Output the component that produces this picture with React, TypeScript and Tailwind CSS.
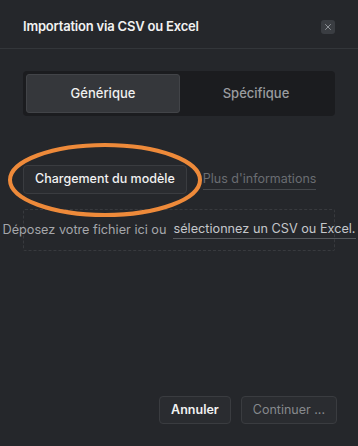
import { X } from 'lucide-react';

export default function App() {
  return (
    <div className="relative w-[358px] h-[446px] bg-[#25272b] text-white overflow-hidden flex flex-col" style={{ fontFamily: 'Inter, "Noto Sans", sans-serif' }}>
      {/* Header */}
      <div className="h-[49px] pt-[6px] flex items-center justify-between px-[23px] border-b border-[#33363a] shrink-0">
        <span className="text-[13px] font-semibold tracking-[-0.2px] text-[#f2f2f2]">Importation via CSV ou Excel</span>
        <button className="w-[14px] h-[14px] rounded-[3px] bg-[#3a3d42] flex items-center justify-center text-[#a0a3a8]">
          <X size={10} strokeWidth={2} />
        </button>
      </div>

      {/* Body */}
      <div className="flex-1 flex flex-col px-[23px] pt-[22px]">
        <div className="h-[45px] rounded-[4px] bg-[#1b1c1f] p-[3px] flex">
          <div className="w-[154px] rounded-[3px] bg-[#35373b] border border-[#424448] flex items-center justify-center text-[13px] font-medium text-[#f0f0f0]">
            Générique
          </div>
          <div className="flex-1 flex items-center justify-center text-[13px] font-medium text-[#9a9ca0]">
            Spécifique
          </div>
        </div>

        <div className="mt-[49px] flex items-center gap-[16px]">
          <button className="h-[29px] px-[11px] rounded-[4px] bg-[#2a2c30] border border-[#3a3c40] text-[12.5px] font-medium text-[#f2f2f2]">
            Chargement du modèle
          </button>
          <span className="text-[12.5px] text-[#6a6d72] border-b border-[#45484c] leading-[17px] pb-[2px]">Plus d'informations</span>
        </div>

        <div className="mt-[15px] h-[42px] border border-dashed border-[#383a3e] rounded-[2px] flex items-center justify-center">
          <div className="flex items-center whitespace-nowrap text-[12.7px] text-[#a4a6aa]">
            <span>Déposez votre fichier ici ou</span>
            <span className="ml-[7px] border-b border-[#55585c] leading-[17px] pb-[1px] text-[#c4c6ca]">sélectionnez un CSV ou Excel.</span>
          </div>
        </div>
      </div>

      {/* Footer */}
      <div className="h-[48px] flex items-start justify-end gap-[10px] px-[21px] shrink-0 mb-[2px]">
        <button className="h-[28px] px-[11px] rounded-[4px] bg-[#2a2c30] border border-[#3a3c40] text-[12.5px] font-semibold text-[#f2f2f2]">
          Annuler
        </button>
        <button className="h-[28px] px-[11px] rounded-[4px] bg-[#2a2c30] border border-[#3a3c40] text-[12.5px] text-[#86898d]">
          Continuer ...
        </button>
      </div>

      {/* Annotation */}
      <svg className="absolute left-0 top-0 pointer-events-none" width="358" height="446">
        <ellipse cx="105" cy="180" rx="95" ry="35" fill="none" stroke="#ee8a3a" strokeWidth="4" />
      </svg>
    </div>
  );
}
